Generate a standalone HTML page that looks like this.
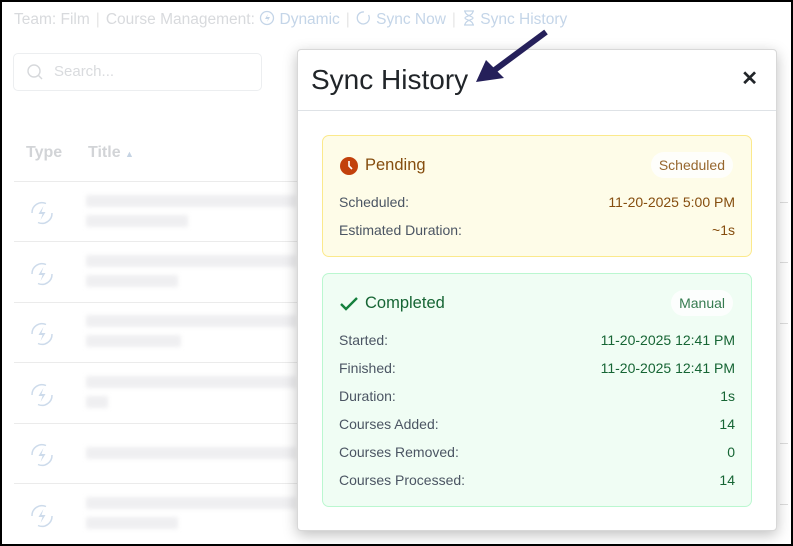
<!DOCTYPE html>
<html><head><style>
*{box-sizing:border-box;margin:0;padding:0}
body{width:793px;height:546px;overflow:hidden;background:#000;font-family:"Liberation Sans",sans-serif;position:relative}
.page{position:absolute;left:2px;top:2px;width:789px;height:542px;background:#fff;overflow:hidden}
.a{position:absolute;white-space:nowrap}
.top{font-size:15.5px;color:#d8dadd;top:8px;left:12px}
.top .l{color:#c4d5e8}
.top .sep{color:#e6e6e6;margin:0 6px}
.search{left:11px;top:51px;width:249px;height:38px;border:1px solid #eceef0;border-radius:5px}
.hd{font-weight:bold;color:#d2d4d7;font-size:16px;top:142px}
.row{left:12px;width:290px;height:1px;background:#ebebeb}
.blur{background:#efeff1;height:12px;border-radius:2px;filter:blur(2px)}
.modal{left:295px;top:47px;width:480px;height:482px;background:#fff;border:1px solid #d8d8d8;border-radius:4px;box-shadow:0 4px 14px rgba(0,0,0,.25)}
.title{font-size:28px;color:#212529;left:13px;top:14px}
.x{right:18px;top:16px;font-size:20px;font-weight:bold;color:#212529}
.hr{left:0;top:60px;width:478px;height:1px;background:#dee2e6}
.card{position:absolute;left:24px;width:430px;border-radius:7px}
.c1{top:85px;height:122px;background:#fefce8;border:1px solid #fbe98c}
.c2{top:223px;height:234px;background:#f0fdf4;border:1px solid #bbf7d0}
.card .h{position:absolute;left:42px;top:20px;font-size:16.5px}
.pill{position:absolute;right:18px;top:16px;background:#fff;border-radius:14px;padding:5px 8px;font-size:14px;opacity:.85}
.lab{position:absolute;left:16px;font-size:14px;color:#4b5563}
.val{position:absolute;right:16px;font-size:14px}
</style></head><body><div class="page">
<div class="a top">Team: Film<span class="sep">|</span>Course Management: <span class="l"><svg width="16" height="16" viewBox="0 0 16 16" style="vertical-align:-2px"><circle cx="8" cy="8" r="6.5" fill="none" stroke="#c4d5e8" stroke-width="1.3"/><path d="M9 4 6 9h3l-1 3 3-5H8z" fill="#c4d5e8"/></svg> Dynamic</span><span class="sep">|</span><span class="l"><svg width="16" height="16" viewBox="0 0 16 16" style="vertical-align:-2px"><path d="M12.5 5A6 6 0 1 1 8 2" fill="none" stroke="#c4d5e8" stroke-width="1.3"/></svg> Sync Now</span><span class="sep">|</span><span class="l"><svg width="14" height="16" viewBox="0 0 14 16" style="vertical-align:-2px"><path d="M2 1h10M2 15h10M3 1c0 5 8 5 8 7s-8 2-8 7M11 1c0 5-8 5-8 7s8 2 8 7" fill="none" stroke="#c4d5e8" stroke-width="1.2"/></svg> Sync History</span></div>
<div class="a search"><svg width="18" height="18" viewBox="0 0 18 18" style="position:absolute;left:12px;top:9px"><circle cx="8" cy="8" r="6" fill="none" stroke="#d6d8db" stroke-width="1.4"/><path d="M12.5 12.5 16 16" stroke="#d6d8db" stroke-width="1.4"/></svg><span style="position:absolute;left:40px;top:9px;font-size:15px;color:#d9dbde">Search...</span></div>
<div class="a hd" style="left:24px">Type</div><div class="a hd" style="left:86px">Title <span style="font-size:9px;color:#c5d3e3">▲</span></div>
<div class="a row" style="top:179px"></div><div class="a row" style="top:239px"></div><div class="a row" style="top:300px"></div><div class="a row" style="top:360px"></div><div class="a row" style="top:421px"></div><div class="a row" style="top:481px"></div>
<div class="a" style="left:27px;top:198px">
<svg width="26" height="330" viewBox="0 0 26 330"><defs><g id="ic"><path d="M3 13A10 10 0 0 1 17 3.5M23 13A10 10 0 0 1 9 22.5" fill="none" stroke="#cddbeb" stroke-width="1.5"/><path d="M14.5 6 9.5 14h4l-2 6 5-8h-4z" fill="#cddbeb"/></g></defs><use href="#ic"/><use href="#ic" y="61"/><use href="#ic" y="121"/><use href="#ic" y="182"/><use href="#ic" y="242"/><use href="#ic" y="303"/></svg></div>
<div class="a blur" style="left:84px;top:193px;width:210px"></div><div class="a blur" style="left:84px;top:213px;width:102px"></div>
<div class="a blur" style="left:84px;top:253px;width:210px"></div><div class="a blur" style="left:84px;top:273px;width:92px"></div>
<div class="a blur" style="left:84px;top:313px;width:210px"></div><div class="a blur" style="left:84px;top:333px;width:95px"></div>
<div class="a blur" style="left:84px;top:374px;width:210px"></div><div class="a blur" style="left:84px;top:394px;width:22px"></div>
<div class="a blur" style="left:84px;top:445px;width:210px"></div>
<div class="a blur" style="left:84px;top:495px;width:210px"></div><div class="a blur" style="left:84px;top:515px;width:92px"></div>
<div class="a" style="left:778px;top:200px;width:8px;height:1px;background:#ddd"></div>
<div class="a" style="left:778px;top:260px;width:8px;height:1px;background:#ddd"></div>
<div class="a" style="left:778px;top:321px;width:8px;height:1px;background:#ddd"></div>
<div class="a" style="left:778px;top:441px;width:8px;height:1px;background:#ddd"></div>
<div class="a" style="left:778px;top:502px;width:8px;height:1px;background:#ddd"></div>
<div class="a modal">
<div class="a title">Sync History</div>
<div class="a x">✕</div>
<div class="a hr"></div>
<div class="card c1">
<svg width="20" height="20" viewBox="0 0 20 20" style="position:absolute;left:16px;top:20px"><circle cx="10" cy="10" r="9" fill="#c2410c"/><path d="M10 5v5l3 3" stroke="#fff" stroke-width="1.6" fill="none"/></svg>
<div class="h" style="color:#854d0e">Pending</div>
<div class="pill" style="color:#854d0e">Scheduled</div>
<div class="lab" style="top:58px">Scheduled:</div><div class="val" style="top:58px;color:#854d0e">11-20-2025 5:00 PM</div>
<div class="lab" style="top:86px">Estimated Duration:</div><div class="val" style="top:86px;color:#854d0e">~1s</div>
</div>
<div class="card c2">
<svg width="20" height="20" viewBox="0 0 20 20" style="position:absolute;left:16px;top:20px"><path d="M2 10l5 5L18 4" stroke="#15803d" stroke-width="2.4" fill="none"/></svg>
<div class="h" style="color:#166534">Completed</div>
<div class="pill" style="color:#166534">Manual</div>
<div class="lab" style="top:58px">Started:</div><div class="val" style="top:58px;color:#166534">11-20-2025 12:41 PM</div>
<div class="lab" style="top:86px">Finished:</div><div class="val" style="top:86px;color:#166534">11-20-2025 12:41 PM</div>
<div class="lab" style="top:114px">Duration:</div><div class="val" style="top:114px;color:#166534">1s</div>
<div class="lab" style="top:142px">Courses Added:</div><div class="val" style="top:142px;color:#166534">14</div>
<div class="lab" style="top:170px">Courses Removed:</div><div class="val" style="top:170px;color:#166534">0</div>
<div class="lab" style="top:198px">Courses Processed:</div><div class="val" style="top:198px;color:#166534">14</div>
</div>
</div>
<svg class="a" style="left:0;top:0" width="789" height="542"><path d="M544 30 490 70" stroke="#25205a" stroke-width="6"/><path d="M474 80 484 58 502 76z" fill="#25205a"/></svg>
</div></body></html>
